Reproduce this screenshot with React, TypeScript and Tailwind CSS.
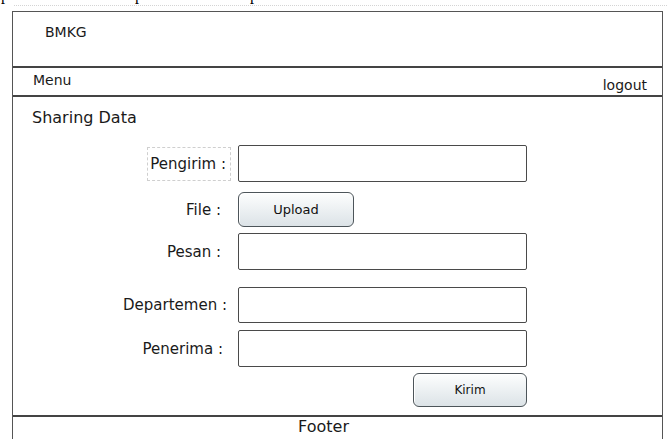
const fields = [
  { label: "Pengirim :", kind: "input", mt: "mt-[16px]", h: "h-[37px]", pr: "pr-[5px]", dashed: true },
  { label: "File :", kind: "upload", mt: "mt-[10px]", h: "h-[35px]", pr: "pr-[10px]" },
  { label: "Pesan :", kind: "input", mt: "mt-[6px]", h: "h-[37px]", pr: "pr-[10px]" },
  { label: "Departemen :", kind: "input", mt: "mt-[17px]", h: "h-[36px]", pr: "pr-[4px]" },
  { label: "Penerima :", kind: "input", mt: "mt-[7px]", h: "h-[37px]", pr: "pr-[8px]" },
]

function SketchButton({ text, className }: { text: string; className: string }) {
  return (
    <button
      className={`flex items-center justify-center rounded-[6px] border border-[#4d555a] bg-linear-to-b from-[#fdfefe] to-[#dce3e7] text-[#111] shadow-[inset_1px_1px_0_#ffffff] ${className}`}
    >
      {text}
    </button>
  )
}

function FieldRow({ field }: { field: (typeof fields)[number] }) {
  return (
    <div className={`flex items-center gap-[7px] ${field.mt} ${field.h}`}>
      <div className="flex w-[218px] justify-end text-[15px]">
        {field.dashed ? (
          <div className="flex h-[34px] items-center border border-dashed border-[#cfcfcf] pl-[2px] pr-[4px]">
            {field.label}
          </div>
        ) : (
          <span className={field.pr}>{field.label}</span>
        )}
      </div>
      {field.kind === "upload" ? (
        <SketchButton text="Upload" className="h-full w-[116px] text-[13px]" />
      ) : (
        <div className="h-full w-[289px] rounded-[2px] border-[1.5px] border-[#4a4a4a] bg-white" />
      )}
    </div>
  )
}

export default function App() {
  return (
    <div className="h-[439px] w-[667px] overflow-hidden bg-white font-['DejaVu_Sans',sans-serif] text-[#1a1a1a]">
      {/* tail of the line above, cut off by the frame */}
      <div className="h-[5px] overflow-hidden font-['Liberation_Serif',serif] text-[16px] leading-[16px] text-black">
        <div className="-mt-[13px] flex">
          <span className="ml-[1px]">p</span>
          <span className="ml-[126px]">p</span>
          <span className="ml-[107px]">p</span>
        </div>
      </div>
      <div className="ml-[14px] h-[6px] border-t border-dotted border-[#d4d4d4]" />

      <div className="ml-[12px] w-[651px] border-x border-t border-[#555]">
        <header className="h-[56px] border-b-2 border-[#444] pl-[32px] pt-[10px] text-[14px] leading-[20px]">
          BMKG
        </header>

        <nav className="flex h-[29px] justify-between border-b-2 border-[#444] pl-[20px] pr-[15px] text-[14px]">
          <span className="pt-[2px] leading-[20px]">Menu</span>
          <span className="self-end pb-[1px] leading-[18px]">logout</span>
        </nav>

        <main className="h-[318px] pl-[19px] pt-[10px] text-[16px] leading-[22px]">
          <h1>Sharing Data</h1>
          <div className="-ml-[19px]">
            {fields.map((f) => (
              <FieldRow key={f.label} field={f} />
            ))}
            <div className="mt-[6px] flex h-[34px] w-[514px] justify-end">
              <SketchButton text="Kirim" className="h-full w-[114px] text-[12px]" />
            </div>
          </div>
        </main>

        <footer className="h-[30px] border-t-2 border-[#444] pr-[28px] text-center text-[16px] leading-[20px]">
          Footer
        </footer>
      </div>
    </div>
  )
}
